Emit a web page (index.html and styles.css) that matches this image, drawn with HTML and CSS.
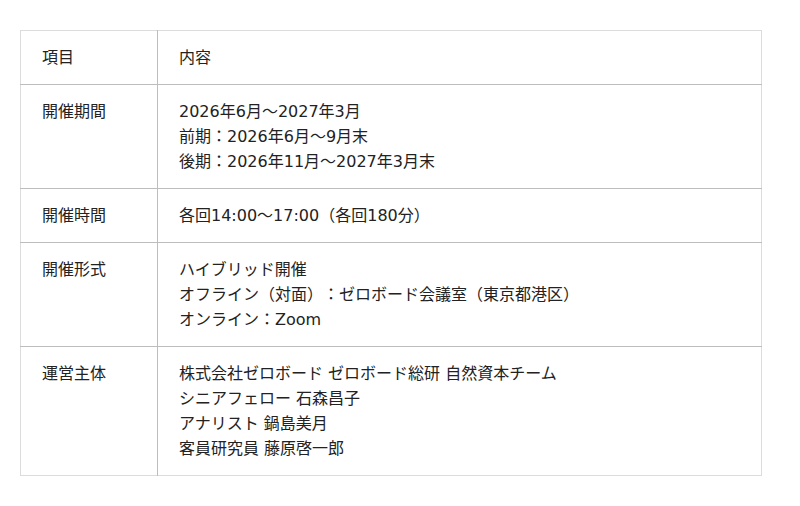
FILE: index.html
```html
<!DOCTYPE html>
<html>
<head>
<meta charset="utf-8">
<link rel="stylesheet" href="styles.css">
</head>
<body>
<div class="wrap">
<table class="info">
<tr><td class="label">項目</td><td class="value">内容</td></tr>
<tr><td class="label">開催期間</td><td class="value">2026年6月～2027年3月<br>前期：2026年6月～9月末<br>後期：2026年11月～2027年3月末</td></tr>
<tr><td class="label">開催時間</td><td class="value">各回14:00～17:00（各回180分）</td></tr>
<tr><td class="label">開催形式</td><td class="value">ハイブリッド開催<br>オフライン（対面）：ゼロボード会議室（東京都港区）<br>オンライン：Zoom</td></tr>
<tr><td class="label">運営主体</td><td class="value">株式会社ゼロボード ゼロボード総研 自然資本チーム<br>シニアフェロー 石森昌子<br>アナリスト 鍋島美月<br>客員研究員 藤原啓一郎</td></tr>
</table>
</div>
</body>
</html>
```
FILE: styles.css
```css
html, body {
  margin: 0;
  padding: 0;
  background: #fff;
}
.wrap {
  padding: 30px 38px 0 20px;
}
.info {
  width: 742px;
  border-collapse: collapse;
  border: 1px solid #dcdcdc;
  font-family: "DejaVu Sans", "Noto Sans CJK JP", sans-serif;
  font-size: 16px;
  line-height: 25px;
  color: #222;
  text-spacing-trim: space-all;
}
.info td {
  padding: 14px 20px 14px 21px;
  vertical-align: top;
  border-top: 1px solid #bdbdbd;
}
.info tr:first-child td {
  border-top: none;
}
.label {
  width: 95px;
  border-right: 1px solid #bdbdbd;
}
```
